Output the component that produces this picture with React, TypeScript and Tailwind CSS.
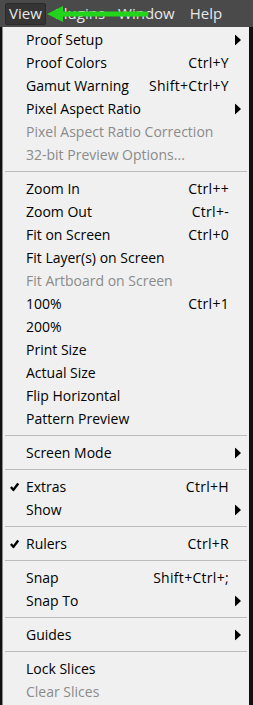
import React from 'react'

type Item =
  | { sep: true }
  | { label: string; shortcut?: string; sub?: boolean; disabled?: boolean; checked?: boolean; sep?: false }

const items: Item[] = [
  { label: 'Proof Setup', sub: true },
  { label: 'Proof Colors', shortcut: 'Ctrl+Y' },
  { label: 'Gamut Warning', shortcut: 'Shift+Ctrl+Y' },
  { label: 'Pixel Aspect Ratio', sub: true },
  { label: 'Pixel Aspect Ratio Correction', disabled: true },
  { label: '32-bit Preview Options...', disabled: true },
  { sep: true },
  { label: 'Zoom In', shortcut: 'Ctrl++' },
  { label: 'Zoom Out', shortcut: 'Ctrl+-' },
  { label: 'Fit on Screen', shortcut: 'Ctrl+0' },
  { label: 'Fit Layer(s) on Screen' },
  { label: 'Fit Artboard on Screen', disabled: true },
  { label: '100%', shortcut: 'Ctrl+1' },
  { label: '200%' },
  { label: 'Print Size' },
  { label: 'Actual Size' },
  { label: 'Flip Horizontal' },
  { label: 'Pattern Preview' },
  { sep: true },
  { label: 'Screen Mode', sub: true },
  { sep: true },
  { label: 'Extras', shortcut: 'Ctrl+H', checked: true },
  { label: 'Show', sub: true },
  { sep: true },
  { label: 'Rulers', shortcut: 'Ctrl+R', checked: true },
  { sep: true },
  { label: 'Snap', shortcut: 'Shift+Ctrl+;' },
  { label: 'Snap To', sub: true },
  { sep: true },
  { label: 'Guides', sub: true },
  { sep: true },
  { label: 'Lock Slices' },
  { label: 'Clear Slices', disabled: true },
]

function SubArrow() {
  return (
    <svg className="absolute right-[8px] top-1/2 -translate-y-1/2" width="6" height="11" viewBox="0 0 6 11">
      <path d="M0 0L6 5.5L0 11Z" fill="#000" />
    </svg>
  )
}

function Check() {
  return (
    <svg className="absolute left-[7px] top-1/2 -translate-y-1/2" width="9" height="9" viewBox="0 0 9 9">
      <path d="M0.9 4.4L3.4 7.4L8.2 1" fill="none" stroke="#000" strokeWidth="2.4" />
    </svg>
  )
}

export default function App() {
  return (
    <div
      className="relative w-[253px] h-[705px] overflow-hidden bg-[#111111] text-[14px]"
      style={{ fontFamily: '"Open Sans", "Noto Sans", sans-serif' }}
    >
      {/* menu bar */}
      <div className="h-[27px] bg-[#4a4a4a] flex items-center text-[15px] text-[#e8e8e8]">
        <div className="ml-[5px] h-[22px] px-[3px] flex items-center rounded-[2px] bg-[#353535] border border-[#2a2a2a]">
          View
        </div>
        <span className="ml-[9px]">Plugins</span>
        <span className="ml-[13px]">Window</span>
        <span className="ml-[15px]">Help</span>
      </div>

      {/* green arrow pointing at View */}
      <svg className="absolute left-[46px] top-[4px]" width="104" height="20" viewBox="0 0 104 20">
        <path d="M12 10H100" stroke="#22d41c" strokeWidth="5" strokeLinecap="round" />
        <path d="M1 10L17 2V18Z" fill="#22d41c" />
      </svg>

      {/* dropdown */}
      <div className="ml-[2px] w-[247px] h-[678px] bg-[#f0f0f0] border-l border-[#8c8c8c] pt-px">
        {items.map((it, i) =>
          it.sep ? (
            <div key={i} className="h-[11px] flex items-center px-[2px]">
              <div className="h-px w-full bg-[#bdbdbd]" />
            </div>
          ) : (
            <div
              key={i}
              className={`relative h-[23px] flex items-center pl-[23px] pr-[20px] leading-none ${
                it.disabled ? 'text-[#8b8b8b]' : 'text-black'
              }`}
            >
              {it.checked && <Check />}
              <span className="flex-1 whitespace-nowrap">{it.label}</span>
              {it.shortcut && <span className="whitespace-nowrap tracking-[0.3px]">{it.shortcut}</span>}
              {it.sub && <SubArrow />}
            </div>
          )
        )}
      </div>
    </div>
  )
}
